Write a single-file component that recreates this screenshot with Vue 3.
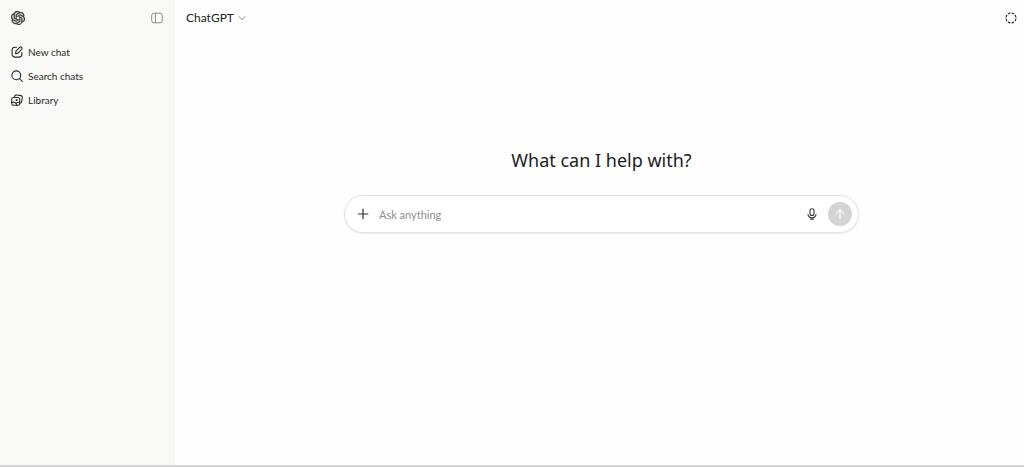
<script setup>
import { ref } from 'vue'

const prompt = ref('')
const links = [
  { id: 'new', label: 'New chat' },
  { id: 'search', label: 'Search chats' },
  { id: 'library', label: 'Library' },
]
</script>

<template>
  <div class="app">
    <aside class="sidebar">
      <div class="sidebar-head">
        <a href="#" class="icon-link" aria-label="Home">
          <svg width="14" height="14" viewBox="0 0 24 24" fill="currentColor" stroke="currentColor" stroke-width=".7">
            <path d="M22.2819 9.8211a5.9847 5.9847 0 0 0-.5157-4.9108 6.0462 6.0462 0 0 0-6.5098-2.9A6.0651 6.0651 0 0 0 4.9807 4.1818a5.9847 5.9847 0 0 0-3.9977 2.9 6.0462 6.0462 0 0 0 .7427 7.0966 5.98 5.98 0 0 0 .511 4.9107 6.051 6.051 0 0 0 6.5146 2.9001A5.9847 5.9847 0 0 0 13.2599 24a6.0557 6.0557 0 0 0 5.7718-4.2058 5.9894 5.9894 0 0 0 3.9977-2.9001 6.0557 6.0557 0 0 0-.7475-7.0729zm-9.022 12.6081a4.4755 4.4755 0 0 1-2.8764-1.0408l.1419-.0804 4.7783-2.7582a.7948.7948 0 0 0 .3927-.6813v-6.7369l2.02 1.1686a.071.071 0 0 1 .038.052v5.5826a4.504 4.504 0 0 1-4.4945 4.4944zm-9.6607-4.1254a4.4708 4.4708 0 0 1-.5346-3.0137l.142.0852 4.783 2.7582a.7712.7712 0 0 0 .7806 0l5.8428-3.3685v2.3324a.0804.0804 0 0 1-.0332.0615L9.74 19.9502a4.4992 4.4992 0 0 1-6.1408-1.6464zM2.3408 7.8956a4.485 4.485 0 0 1 2.3655-1.9728V11.6a.7664.7664 0 0 0 .3879.6765l5.8144 3.3543-2.0201 1.1685a.0757.0757 0 0 1-.071 0l-4.8303-2.7865A4.504 4.504 0 0 1 2.3408 7.872zm16.5963 3.8558L13.1038 8.364 15.1192 7.2a.0757.0757 0 0 1 .071 0l4.8303 2.7913a4.4944 4.4944 0 0 1-.6765 8.1042v-5.6772a.79.79 0 0 0-.407-.667zm2.0107-3.0231l-.142-.0852-4.7735-2.7818a.7759.7759 0 0 0-.7854 0L9.409 9.2297V6.8974a.0662.0662 0 0 1 .0284-.0615l4.8303-2.7866a4.4992 4.4992 0 0 1 6.6802 4.66zM8.3065 12.863l-2.02-1.1638a.0804.0804 0 0 1-.038-.0567V6.0742a4.4992 4.4992 0 0 1 7.3757-3.4537l-.142.0805L8.704 5.459a.7948.7948 0 0 0-.3927.6813zm1.0976-2.3654l2.602-1.4998 2.6069 1.4998v2.9994l-2.5974 1.4997-2.6067-1.4997Z" />
          </svg>
        </a>
        <button type="button" class="toggle" aria-label="Close sidebar">
          <svg width="12" height="12" viewBox="0 0 12 12" fill="none" stroke="currentColor">
            <rect x=".7" y="1.2" width="10.6" height="9.6" rx="2.2" />
            <path d="M4.4 1.2v9.6" />
          </svg>
        </button>
      </div>
      <nav class="nav">
        <a v-for="link in links" :key="link.id" href="#" class="nav-link">
          <svg width="12" height="12" viewBox="0 0 12 12" fill="none" stroke="currentColor" stroke-width="1.1" stroke-linecap="round" stroke-linejoin="round">
            <template v-if="link.id === 'new'">
              <path d="M5.6 1.3H4A2.9 2.9 0 0 0 1.1 4.2v4A2.9 2.9 0 0 0 4 11.1h4a2.9 2.9 0 0 0 2.9-2.9V6.6" />
              <path d="M8.7 1.3a1.4 1.4 0 0 1 2 2L6.9 7.1 4.5 7.7l.5-2.5z" />
            </template>
            <template v-else-if="link.id === 'search'">
              <circle cx="5.3" cy="5.3" r="4.4" />
              <path d="M8.6 8.6l2.7 2.7" />
            </template>
            <template v-else>
              <path d="M3.4 3.1l.2-.8A1.7 1.7 0 0 1 5.6.9l4.3.7a1.7 1.7 0 0 1 1.4 2l-.7 4.2a1.7 1.7 0 0 1-1.6 1.4" />
              <rect x=".7" y="3.5" width="8" height="7.8" rx="1.8" />
              <path d="M1 8.4c2.2-.9 4.2.2 4.8 2.8M5.2 9.2c.9-1 2.2-1.2 3.3-.6" />
              <circle cx="5.6" cy="6" r=".5" />
            </template>
          </svg>
          <span>{{ link.label }}</span>
        </a>
      </nav>
    </aside>

    <main class="main">
      <header class="topbar">
        <button type="button" class="model">
          <span>ChatGPT</span>
          <svg width="8" height="8" viewBox="0 0 8 8" fill="none" stroke="currentColor" stroke-linecap="round" stroke-linejoin="round">
            <path d="M.8 2.6L4 5.6l3.2-3" />
          </svg>
        </button>
        <button type="button" class="temporary" aria-label="Temporary chat">
          <svg width="12" height="12" viewBox="0 0 12 12" fill="none" stroke="currentColor" stroke-width="1.1">
            <circle cx="6" cy="6" r="5" pathLength="80" stroke-dasharray="7 3" stroke-dashoffset="-1.5" />
          </svg>
        </button>
      </header>

      <section class="center">
        <h1>What can I help with?</h1>
        <form class="composer" @submit.prevent>
          <button type="button" class="plain" aria-label="Add files">
            <svg width="12" height="12" viewBox="0 0 12 12" fill="none" stroke="currentColor" stroke-width="1.2" stroke-linecap="round">
              <path d="M6 1.2v9.6M1.2 6h9.6" />
            </svg>
          </button>
          <input v-model="prompt" type="text" placeholder="Ask anything" aria-label="Ask anything" />
          <button type="button" class="plain" aria-label="Dictate">
            <svg width="12" height="12" viewBox="0 0 12 12" fill="none" stroke="currentColor" stroke-width="1.1" stroke-linecap="round">
              <rect x="4" y=".7" width="4" height="6.8" rx="2" />
              <path d="M2 6.6a4.1 4.1 0 0 0 8 0M6 9.7v1.6M4.6 11.3h2.8" />
            </svg>
          </button>
          <button type="submit" class="send" aria-label="Send">
            <svg width="12" height="12" viewBox="0 0 12 12" fill="none" stroke="currentColor" stroke-width="1.3" stroke-linecap="round" stroke-linejoin="round">
              <path d="M6 10.6V1.6M2.4 5.2L6 1.6l3.6 3.6" />
            </svg>
          </button>
        </form>
      </section>
    </main>
  </div>
</template>

<style>
body {
  margin: 0;
}
</style>

<style scoped>
.app {
  display: flex;
  box-sizing: border-box;
  min-height: 100vh;
  border-bottom: 2px solid #d4d4d4;
  background: #fefefe;
  color: #222;
  font-family: Lato, "Open Sans", sans-serif;
}

button {
  display: flex;
  align-items: center;
  justify-content: center;
  padding: 0;
  border: 0;
  background: none;
  color: inherit;
  font: inherit;
  cursor: pointer;
}

svg {
  display: block;
  flex: none;
}

.sidebar {
  flex: none;
  box-sizing: border-box;
  width: 175px;
  border-right: 1px solid #f6f6f4;
  background: #f9f9f7;
}

.sidebar-head {
  display: flex;
  align-items: center;
  justify-content: space-between;
  height: 35px;
  padding: 0 11px;
}

.icon-link {
  color: #333;
}

.toggle {
  color: #8c8c8c;
}

.nav {
  display: flex;
  flex-direction: column;
  padding-top: 5px;
}

.nav-link {
  display: flex;
  align-items: center;
  gap: 5px;
  height: 24px;
  padding-left: 11px;
  color: #2b2b2b;
  font-size: 10px;
  text-decoration: none;
}

.main {
  display: flex;
  flex: 1;
  flex-direction: column;
  min-width: 0;
}

.topbar {
  display: flex;
  align-items: center;
  justify-content: space-between;
  height: 35px;
  padding: 0 7px 0 11px;
}

.model {
  gap: 4px;
  font-size: 12px;
}

.model svg {
  color: #8c8c8c;
}

.center {
  display: flex;
  flex-direction: column;
  align-items: center;
  padding: 113px 16px 0 20px;
}

h1 {
  margin: 0 0 22px;
  color: #1c1c1c;
  font-family: "Noto Sans", sans-serif;
  font-size: 18px;
  font-weight: 400;
  line-height: 25px;
}

.composer {
  display: flex;
  align-items: center;
  box-sizing: border-box;
  width: 100%;
  max-width: 515px;
  height: 38px;
  padding: 0 6px 0 12px;
  border: 1px solid #e3e3e3;
  border-radius: 19px;
  background: #fff;
  box-shadow: 0 1px 2px #00000014;
}

input {
  flex: 1;
  min-width: 0;
  margin: 0 10px;
  padding: 0;
  border: 0;
  outline: 0;
  background: none;
  color: inherit;
  font: inherit;
  font-size: 11px;
}

input::placeholder {
  color: #8e8e8e;
  opacity: 1;
}

.plain {
  color: #333;
}

.send {
  width: 24px;
  height: 24px;
  margin-left: 10px;
  border-radius: 50%;
  background: #d4d4d4;
  color: #f6f6f6;
}
</style>
